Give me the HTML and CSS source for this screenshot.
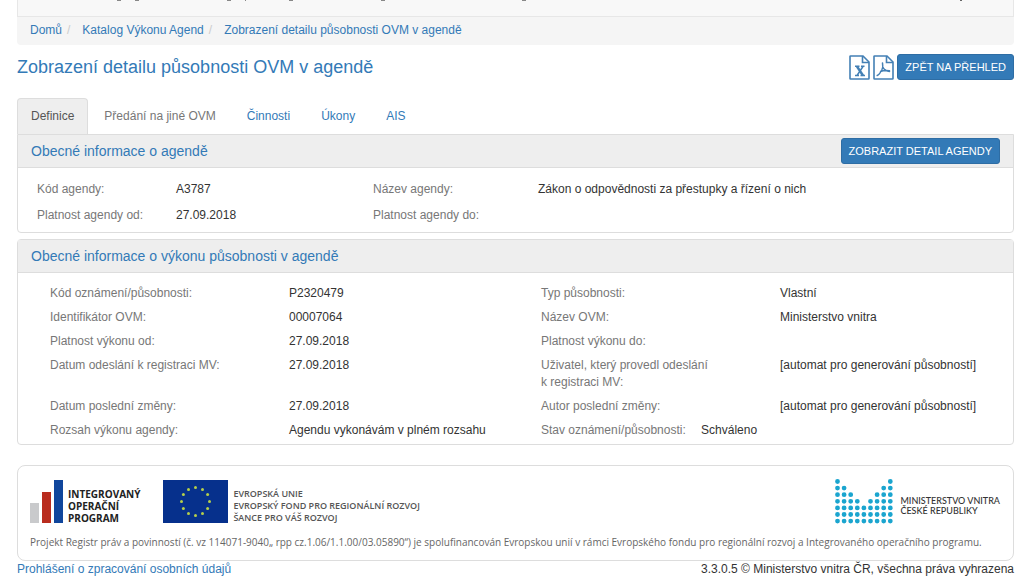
FILE: index.html
```
<!DOCTYPE html>
<html lang="cs">
<head>
<meta charset="utf-8">
<title>Zobrazení detailu působnosti OVM v agendě</title>
<link rel="stylesheet" href="styles.css">
</head>
<body>
<div class="page">
  <div class="topbar">
    <svg width="520" height="2" viewBox="0 0 520 2" stroke="#888" aria-hidden="true"><path d="M99 .5h4M117 .5h4M209 .5h4M227 .5h1M271 .5h4M363 .5h4M504 .5h4"/></svg>
    <svg width="60" height="2" viewBox="0 0 60 2" stroke="#666" aria-hidden="true"><path d="M7 .5h2"/></svg>
  </div>
  <nav class="breadcrumb" aria-label="Navigace">
    <a href="#">Domů</a><span class="sep">/</span>
    <a href="#">Katalog Výkonu Agend</a><span class="sep">/</span>
    <a href="#">Zobrazení detailu působnosti OVM v agendě</a>
  </nav>
  <header class="title-row">
    <h1>Zobrazení detailu působnosti OVM v agendě</h1>
    <div class="actions">
      <a href="#" class="file" aria-label="Export do Excelu">
        <svg width="21" height="25" viewBox="0 0 21 25" fill="none" stroke="#4480b5">
          <path stroke-width="1.600" d="M1.500 1H14l6 6v16.500a.5.5 0 0 1-.5.5h-18a.5.5 0 0 1-.5-.5v-22a.5.5 0 0 1 .5-.5z"/>
          <path stroke-width="1.600" d="M13.500 1v6.500H20"/>
          <path stroke-width="2.400" d="M8 11.500l6 9"/>
          <path stroke-width="1.500" d="M14 11.500l-6 9M6 11.200h4.500M12 11.200h3.500M6 20.500h4M11.500 20.500H16"/>
        </svg>
      </a>
      <a href="#" class="file" aria-label="Export do PDF">
        <svg width="21" height="25" viewBox="0 0 21 25" fill="none" stroke="#4480b5">
          <path stroke-width="1.600" d="M1.500 1H14l6 6v16.500a.5.5 0 0 1-.5.5h-18a.5.5 0 0 1-.5-.5v-22a.5.5 0 0 1 .5-.5z"/>
          <path stroke-width="1.600" d="M13.500 1v6.500H20"/>
          <path stroke-width="1.500" stroke-linecap="round" d="M9.500 8c.6 3 .4 4.500-.5 6.500c-1.500 3-3 5.500-4.800 6M9.800 12c1.200 2.500 3.200 4.500 6.700 4.500M7.500 16.500c2.500-1 5-1.300 9-.7"/>
        </svg>
      </a>
      <button type="button" class="btn">ZPĚT NA PŘEHLED</button>
    </div>
  </header>
  <nav class="tabs" aria-label="Záložky">
    <a href="#" class="tab active">Definice</a>
    <a href="#" class="tab muted">Předání na jiné OVM</a>
    <a href="#" class="tab">Činnosti</a>
    <a href="#" class="tab">Úkony</a>
    <a href="#" class="tab">AIS</a>
  </nav>
  <section class="panel first">
    <div class="panel-head">
      <h2>Obecné informace o agendě</h2>
      <button type="button" class="btn">ZOBRAZIT DETAIL AGENDY</button>
    </div>
    <dl class="grid agenda">
      <dt>Kód agendy:</dt><dd>A3787</dd><dt>Název agendy:</dt><dd>Zákon o odpovědnosti za přestupky a řízení o nich</dd>
      <dt>Platnost agendy od:</dt><dd>27.09.2018</dd><dt>Platnost agendy do:</dt><dd></dd>
    </dl>
  </section>
  <section class="panel">
    <div class="panel-head">
      <h2>Obecné informace o výkonu působnosti v agendě</h2>
    </div>
    <dl class="grid detail">
      <dt>Kód oznámení/působnosti:</dt><dd>P2320479</dd><dt>Typ působnosti:</dt><dd>Vlastní</dd>
      <dt>Identifikátor OVM:</dt><dd>00007064</dd><dt>Název OVM:</dt><dd>Ministerstvo vnitra</dd>
      <dt>Platnost výkonu od:</dt><dd>27.09.2018</dd><dt>Platnost výkonu do:</dt><dd></dd>
      <dt>Datum odeslání k registraci MV:</dt><dd>27.09.2018</dd><dt>Uživatel, který provedl odeslání<br>k registraci MV:</dt><dd>[automat pro generování působností]</dd>
      <dt>Datum poslední změny:</dt><dd>27.09.2018</dd><dt>Autor poslední změny:</dt><dd>[automat pro generování působností]</dd>
      <dt>Rozsah výkonu agendy:</dt><dd>Agendu vykonávám v plném rozsahu</dd><dt class="status">Stav oznámení/působnosti: <span>Schváleno</span></dt>
    </dl>
  </section>
  <section class="sponsors">
    <div class="logos">
      <div class="logo">
        <svg width="33" height="43" viewBox="0 0 33 43">
          <path fill="#c9cacc" d="M0 23h9v20H0z"/><path fill="#b92c1e" d="M12 12h9v31h-9z"/><path fill="#10469c" d="M24 0h9v43h-9z"/>
        </svg>
        <p class="iop">INTEGROVANÝ<br>OPERAČNÍ<br>PROGRAM</p>
      </div>
      <div class="logo eu">
        <svg width="65" height="43" viewBox="0 0 65 43">
          <path fill="#06308c" d="M0 0h65v43H0z"/>
          <g fill="#b5cf4a"><circle cx="32.500" cy="7.500" r="1.500"/><circle cx="39.500" cy="9.400" r="1.500"/><circle cx="44.600" cy="14.500" r="1.500"/><circle cx="46.500" cy="21.500" r="1.500"/><circle cx="44.600" cy="28.500" r="1.500"/><circle cx="39.500" cy="33.600" r="1.500"/><circle cx="32.500" cy="35.500" r="1.500"/><circle cx="25.500" cy="33.600" r="1.500"/><circle cx="20.400" cy="28.500" r="1.500"/><circle cx="18.500" cy="21.500" r="1.500"/><circle cx="20.400" cy="14.500" r="1.500"/><circle cx="25.500" cy="9.400" r="1.500"/></g>
        </svg>
        <p class="eu-text">EVROPSKÁ UNIE<br>EVROPSKÝ FOND PRO REGIONÁLNÍ ROZVOJ<br>ŠANCE PRO VÁŠ ROZVOJ</p>
      </div>
      <div class="logo mv">
        <svg width="58" height="45" viewBox="0 0 58 45" fill="none" stroke="#1ba5cf" stroke-width="4.800" stroke-linecap="round" stroke-dasharray="0 6.600">
          <path d="M2.500 2.500v40M9.100 9.100v34M15.700 15.700v27M22.300 22.300v21M28.900 28.900v14M35.500 22.300v21M42.100 15.700v27M48.700 9.100v34M55.300 2.500v40"/>
        </svg>
        <p class="mv-text">MINISTERSTVO VNITRA<br>ČESKÉ REPUBLIKY</p>
      </div>
    </div>
    <p class="project">Projekt Registr práv a povinností (č. vz 114071-9040„ rpp cz.1.06/1.1.00/03.05890“) je spolufinancován Evropskou unií v rámci Evropského fondu pro regionální rozvoj a Integrovaného operačního programu.</p>
  </section>
  <footer class="footer">
    <a href="#">Prohlášení o zpracování osobních údajů</a>
    <span>3.3.0.5 © Ministerstvo vnitra ČR, všechna práva vyhrazena</span>
  </footer>
</div>
</body>
</html>
```
FILE: styles.css
```
* { box-sizing: border-box; }
html { overflow: hidden auto; scrollbar-width: none; }
body { margin: 0; background: #fff; color: #333; font: 12px/17px "Liberation Sans", Arial, sans-serif; }
a { color: #337ab7; text-decoration: none; }
h1, h2, p, dl, dd { margin: 0; font-weight: 400; }
svg { display: block; flex: none; }
.page { padding: 0 10px 0 17px; }
.topbar { display: flex; justify-content: space-between; height: 17px; background: #f8f8f8; border: 1px solid #e7e7e7; border-top: 0; }
.breadcrumb { display: flex; height: 28px; align-items: center; padding: 0 13px 2px; background: #f5f5f5; border-radius: 0 0 4px 4px; }
.sep { color: #ccc; margin: 0 12px 0 5px; }
.title-row { display: flex; justify-content: space-between; align-items: center; padding-top: 9px; }
h1 { color: #337ab7; font-size: 18px; line-height: 26px; }
.actions { display: flex; gap: 3px; align-items: center; }
.btn { height: 26px; padding: 0 7px; border: 1px solid #2e6da4; border-radius: 3px; background: #337ab7; color: #fff; font: 11px/16px "Liberation Sans", Arial, sans-serif; }
.tabs { display: flex; gap: 1px; margin-top: 18px; }
.tab { padding: 9px 14px; border: 1px solid transparent; border-bottom: 0; border-radius: 4px 4px 0 0; }
.tab.active { padding: 9px 13px; background: #eee; border-color: #ddd; color: #555; }
.tab.muted { color: #777; }
.panel { border: 1px solid #ddd; border-radius: 4px; margin-bottom: 6px; }
.panel.first { border-radius: 0 0 4px 4px; }
.panel-head { display: flex; justify-content: space-between; align-items: center; height: 33px; padding: 0 13px; background: #eee; border-bottom: 1px solid #ddd; }
h2 { color: #337ab7; font-size: 14px; line-height: 20px; }
.grid { display: grid; }
dt { color: #777; }
.agenda { grid-template-columns: 139fr 197fr 165fr 475fr; padding: 13px 0 8px 19px; row-gap: 9px; }
.detail { grid-template-columns: 239fr 252fr 239fr 233fr; padding: 12px 0 5px 32px; row-gap: 7px; }
.status { grid-column: span 2; }
.status span { color: #333; margin-left: 12px; }
.sponsors { margin-top: 20px; padding: 13px 11px 12px 12px; border: 1px solid #ddd; border-radius: 8px; }
.logos { display: flex; align-items: center; }
.logo { display: flex; align-items: center; gap: 5px; }
.eu { margin-left: 23px; }
.mv { margin-left: auto; margin-right: 2px; gap: 7px; }
.iop { padding-top: 9px; font: 700 10px/12px "Open Sans", sans-serif; color: #222; }
.eu-text { padding-top: 9px; font: 600 9px/12px "Open Sans", sans-serif; color: #555; }
.mv-text { padding-top: 8px; font: 500 9px/10px Lato, sans-serif; color: #333; }
.project { margin-top: 12px; font: 500 10px/12px "Open Sans", sans-serif; color: #666; white-space: nowrap; }
.footer { display: flex; justify-content: space-between; line-height: 17px; }
```
